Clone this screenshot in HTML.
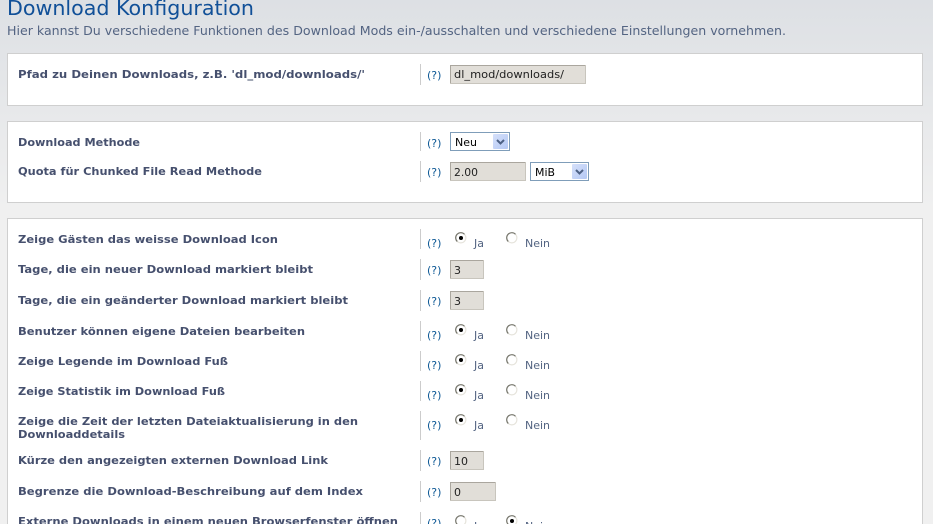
<!DOCTYPE html>
<html lang="de"><head><meta charset="utf-8"><title>Download Konfiguration</title>
<style>
html,body{margin:0;padding:0;width:933px;height:524px;overflow:hidden;background:#f0f0f0}
svg{display:block}
text{font-family:"DejaVu Sans","Liberation Sans",sans-serif;white-space:pre}
.l{font-size:11px;font-weight:bold;fill:#46506e}
.h{font-size:11px;fill:#105a96}
.v{font-size:11px;fill:#222}
.r{font-size:11px;fill:#536482}
.s{font-size:11px;fill:#000}
.p{fill:#fff;stroke:#cfcfcf}
.d{fill:#ccc}
.i{fill:#e1ded8;stroke:#c8c5bd}
.sb{fill:#fff;stroke:#7f9db9}
.c{fill:none;stroke:#4d6185;stroke-width:2}
</style></head><body>
<svg width="933" height="524" viewBox="0 0 933 524" xmlns="http://www.w3.org/2000/svg">
<defs>
<linearGradient id="bg" x1="0" y1="0" x2="0" y2="1"><stop offset="0" stop-color="#dde0e4"/><stop offset="1" stop-color="#f0f0f0"/></linearGradient>
<linearGradient id="ab" x1="0" y1="0" x2="1" y2="1"><stop offset="0" stop-color="#d5e0fa"/><stop offset="1" stop-color="#b4c8f4"/></linearGradient>
<g id="ron"><circle r="5" fill="#fff"/><path d="M-3.6 3.6A5.1 5.1 0 1 1 3.6 -3.6" fill="none" stroke="#77776d" stroke-width="1.2"/><path d="M3.6 -3.6A5.1 5.1 0 0 1 -3.6 3.6" fill="none" stroke="#e6e4dc" stroke-width="1.2"/><circle r="2" fill="#000"/></g>
<g id="rof"><circle r="5" fill="#fff"/><path d="M-3.6 3.6A5.1 5.1 0 1 1 3.6 -3.6" fill="none" stroke="#77776d" stroke-width="1.2"/><path d="M3.6 -3.6A5.1 5.1 0 0 1 -3.6 3.6" fill="none" stroke="#e6e4dc" stroke-width="1.2"/></g>
</defs>
<rect width="933" height="210" fill="url(#bg)"/>
<text x="7" y="15" font-size="20" fill="#115098" textLength="247" lengthAdjust="spacingAndGlyphs">Download Konfiguration</text>
<text x="7" y="35" font-size="12" fill="#536482" textLength="779" lengthAdjust="spacingAndGlyphs">Hier kannst Du verschiedene Funktionen des Download Mods ein-/ausschalten und verschiedene Einstellungen vornehmen.</text>

<rect class="p" x="7.5" y="53.5" width="915" height="52"/>
<rect class="p" x="7.5" y="121.5" width="915" height="81"/>
<rect class="p" x="7.5" y="218.5" width="915" height="320"/>

<g>
<rect class="d" x="420" y="64" width="1" height="21"/>
<rect class="d" x="420" y="132" width="1" height="19"/>
<rect class="d" x="420" y="161" width="1" height="21"/>
<rect class="d" x="420" y="229" width="1" height="20"/>
<rect class="d" x="420" y="259" width="1" height="21"/>
<rect class="d" x="420" y="290" width="1" height="21"/>
<rect class="d" x="420" y="321" width="1" height="20"/>
<rect class="d" x="420" y="351" width="1" height="20"/>
<rect class="d" x="420" y="381" width="1" height="20"/>
<rect class="d" x="420" y="411" width="1" height="29"/>
<rect class="d" x="420" y="450" width="1" height="21"/>
<rect class="d" x="420" y="481" width="1" height="21"/>
<rect class="d" x="420" y="512" width="1" height="12"/>
</g>

<text class="l" x="18" y="78" textLength="347" lengthAdjust="spacingAndGlyphs">Pfad zu Deinen Downloads, z.B. 'dl_mod/downloads/'</text>
<text class="l" x="18" y="146" textLength="122" lengthAdjust="spacingAndGlyphs">Download Methode</text>
<text class="l" x="18" y="175" textLength="244" lengthAdjust="spacingAndGlyphs">Quota für Chunked File Read Methode</text>
<text class="l" x="18" y="243" textLength="260" lengthAdjust="spacingAndGlyphs">Zeige Gästen das weisse Download Icon</text>
<text class="l" x="18" y="273" textLength="295" lengthAdjust="spacingAndGlyphs">Tage, die ein neuer Download markiert bleibt</text>
<text class="l" x="18" y="304" textLength="330" lengthAdjust="spacingAndGlyphs">Tage, die ein geänderter Download markiert bleibt</text>
<text class="l" x="18" y="335" textLength="287" lengthAdjust="spacingAndGlyphs">Benutzer können eigene Dateien bearbeiten</text>
<text class="l" x="18" y="365" textLength="210" lengthAdjust="spacingAndGlyphs">Zeige Legende im Download Fuß</text>
<text class="l" x="18" y="395" textLength="207" lengthAdjust="spacingAndGlyphs">Zeige Statistik im Download Fuß</text>
<text class="l" x="18" y="425" textLength="340" lengthAdjust="spacingAndGlyphs">Zeige die Zeit der letzten Dateiaktualisierung in den</text>
<text class="l" x="18" y="438" textLength="107" lengthAdjust="spacingAndGlyphs">Downloaddetails</text>
<text class="l" x="18" y="464" textLength="310" lengthAdjust="spacingAndGlyphs">Kürze den angezeigten externen Download Link</text>
<text class="l" x="18" y="495" textLength="345" lengthAdjust="spacingAndGlyphs">Begrenze die Download-Beschreibung auf dem Index</text>
<text class="l" x="18" y="525" textLength="380" lengthAdjust="spacingAndGlyphs">Externe Downloads in einem neuen Browserfenster öffnen</text>

<text class="h" x="427" y="79">(?)</text>
<text class="h" x="427" y="147">(?)</text>
<text class="h" x="427" y="176">(?)</text>
<text class="h" x="427" y="247">(?)</text>
<text class="h" x="427" y="274">(?)</text>
<text class="h" x="427" y="305">(?)</text>
<text class="h" x="427" y="339">(?)</text>
<text class="h" x="427" y="369">(?)</text>
<text class="h" x="427" y="399">(?)</text>
<text class="h" x="427" y="429">(?)</text>
<text class="h" x="427" y="465">(?)</text>
<text class="h" x="427" y="496">(?)</text>
<text class="h" x="427" y="527">(?)</text>

<rect class="i" x="450.5" y="65.5" width="135" height="18"/>
<path d="M450.5 83V65.5H585" fill="none" stroke="#aaa69e"/>
<text class="v" x="454" y="78" textLength="110" lengthAdjust="spacingAndGlyphs">dl_mod/downloads/</text>

<rect class="sb" x="450.5" y="132.5" width="59" height="18"/>
<rect x="493" y="134" width="15" height="15" rx="1" fill="url(#ab)"/>
<path class="c" d="M497 140l3.5 3.5 3.5-3.5"/>
<text class="s" x="455" y="146" textLength="22" lengthAdjust="spacingAndGlyphs">Neu</text>

<rect class="i" x="450.5" y="162.5" width="75" height="18"/>
<path d="M450.5 180V162.5H525" fill="none" stroke="#aaa69e"/>
<text class="v" x="454" y="176" textLength="24" lengthAdjust="spacingAndGlyphs">2.00</text>
<rect class="sb" x="530.5" y="162.5" width="58" height="18"/>
<rect x="572" y="164" width="15" height="15" rx="1" fill="url(#ab)"/>
<path class="c" d="M576 170l3.5 3.5 3.5-3.5"/>
<text class="s" x="535" y="176" textLength="20" lengthAdjust="spacingAndGlyphs">MiB</text>

<rect class="i" x="450.5" y="260.5" width="33" height="18"/>
<path d="M450.5 278V260.5H483" fill="none" stroke="#aaa69e"/>
<text class="v" x="454" y="274">3</text>
<rect class="i" x="450.5" y="291.5" width="33" height="18"/>
<path d="M450.5 309V291.5H483" fill="none" stroke="#aaa69e"/>
<text class="v" x="454" y="305">3</text>
<rect class="i" x="450.5" y="451.5" width="33" height="18"/>
<path d="M450.5 469V451.5H483" fill="none" stroke="#aaa69e"/>
<text class="v" x="454" y="465">10</text>
<rect class="i" x="450.5" y="482.5" width="45" height="18"/>
<path d="M450.5 500V482.5H495" fill="none" stroke="#aaa69e"/>
<text class="v" x="454" y="496">0</text>

<use href="#ron" x="461" y="238"/><text class="r" x="474" y="247">Ja</text>
<use href="#rof" x="512" y="238"/><text class="r" x="525" y="247">Nein</text>
<use href="#ron" x="461" y="330"/><text class="r" x="474" y="339">Ja</text>
<use href="#rof" x="512" y="330"/><text class="r" x="525" y="339">Nein</text>
<use href="#ron" x="461" y="360"/><text class="r" x="474" y="369">Ja</text>
<use href="#rof" x="512" y="360"/><text class="r" x="525" y="369">Nein</text>
<use href="#ron" x="461" y="390"/><text class="r" x="474" y="399">Ja</text>
<use href="#rof" x="512" y="390"/><text class="r" x="525" y="399">Nein</text>
<use href="#ron" x="461" y="420"/><text class="r" x="474" y="429">Ja</text>
<use href="#rof" x="512" y="420"/><text class="r" x="525" y="429">Nein</text>
<use href="#rof" x="461" y="521"/><text class="r" x="474" y="530">Ja</text>
<use href="#ron" x="512" y="521"/><text class="r" x="525" y="530">Nein</text>
</svg>
</body></html>
